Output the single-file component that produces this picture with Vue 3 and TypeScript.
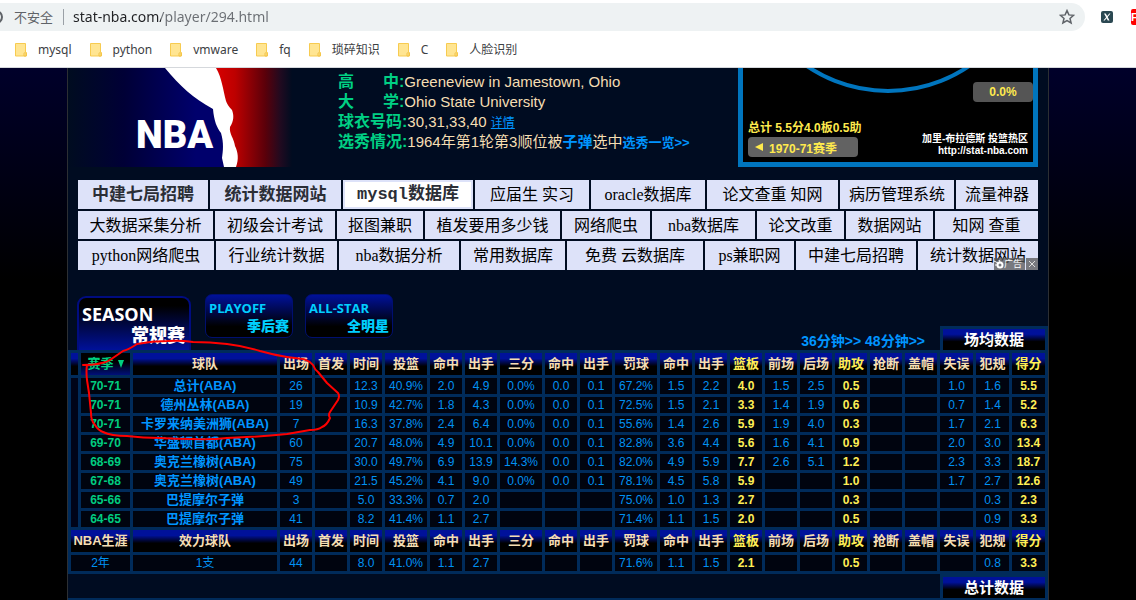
<script setup lang="ts">
import { ref } from 'vue'

interface Ad { label: string; size: number; kind?: 'strong' | 'active' }
interface Season { season: string; team: string; values: string[] }

const address = ref('stat-nba.com/player/294.html')
const bookmarks: string[] = ['mysql', 'python', 'vmware', 'fq', '琐碎知识', 'C', '人脸识别']

const adRows: Ad[][] = [
  [
    { label: '中建七局招聘', size: 130, kind: 'strong' },
    { label: '统计数据网站', size: 131, kind: 'strong' },
    { label: 'mysql数据库', size: 130, kind: 'active' },
    { label: '应届生 实习', size: 114 },
    { label: 'oracle数据库', size: 114 },
    { label: '论文查重 知网', size: 131 },
    { label: '病历管理系统', size: 114 },
    { label: '流量神器', size: 82 },
  ],
  [
    { label: '大数据采集分析', size: 135 },
    { label: '初级会计考试', size: 120 },
    { label: '抠图兼职', size: 86 },
    { label: '植发要用多少钱', size: 135 },
    { label: '网络爬虫', size: 88 },
    { label: 'nba数据库', size: 103 },
    { label: '论文改重', size: 87 },
    { label: '数据网站', size: 87 },
    { label: '知网 查重', size: 103 },
  ],
  [
    { label: 'python网络爬虫', size: 136 },
    { label: '行业统计数据', size: 121 },
    { label: 'nba数据分析', size: 120 },
    { label: '常用数据库', size: 104 },
    { label: '免费 云数据库', size: 136 },
    { label: 'ps兼职网', size: 89 },
    { label: '中建七局招聘', size: 120 },
    { label: '统计数据网站', size: 120 },
  ],
]

const columns: string[] = ['出场', '首发', '时间', '投篮', '命中', '出手', '三分', '命中', '出手', '罚球', '命中', '出手', '篮板', '前场', '后场', '助攻', '抢断', '盖帽', '失误', '犯规', '得分']
const wide = ['投篮', '三分', '罚球']
const medium = ['失误', '犯规', '得分']
const highlighted = ['篮板', '助攻', '得分']
const isKey = (i: number): boolean => highlighted.includes(columns[i])
const colClass = (name: string): string => (wide.includes(name) ? 'c-wide' : medium.includes(name) ? 'c-mid' : 'c-num')

const parse = (line: string): string[] => line.split(' ').map((v) => (v === '_' ? '' : v))

const seasons: Season[] = [
  { season: '70-71', team: '总计(ABA)', values: parse('26 _ 12.3 40.9% 2.0 4.9 0.0% 0.0 0.1 67.2% 1.5 2.2 4.0 1.5 2.5 0.5 _ _ 1.0 1.6 5.5') },
  { season: '70-71', team: '德州丛林(ABA)', values: parse('19 _ 10.9 42.7% 1.8 4.3 0.0% 0.0 0.1 72.5% 1.5 2.1 3.3 1.4 1.9 0.6 _ _ 0.7 1.4 5.2') },
  { season: '70-71', team: '卡罗来纳美洲狮(ABA)', values: parse('7 _ 16.3 37.8% 2.4 6.4 0.0% 0.0 0.1 55.6% 1.4 2.6 5.9 1.9 4.0 0.3 _ _ 1.7 2.1 6.3') },
  { season: '69-70', team: '华盛顿首都(ABA)', values: parse('60 _ 20.7 48.0% 4.9 10.1 0.0% 0.0 0.1 82.8% 3.6 4.4 5.6 1.6 4.1 0.9 _ _ 2.0 3.0 13.4') },
  { season: '68-69', team: '奥克兰橡树(ABA)', values: parse('75 _ 30.0 49.7% 6.9 13.9 14.3% 0.0 0.1 82.0% 4.9 5.9 7.7 2.6 5.1 1.2 _ _ 2.3 3.3 18.7') },
  { season: '67-68', team: '奥克兰橡树(ABA)', values: parse('49 _ 21.5 45.2% 4.1 9.0 0.0% 0.0 0.1 78.1% 4.5 5.8 5.9 _ _ 1.0 _ _ 1.7 2.7 12.6') },
  { season: '65-66', team: '巴提摩尔子弹', values: parse('3 _ 5.0 33.3% 0.7 2.0 _ _ _ 75.0% 1.0 1.3 2.7 _ _ 0.3 _ _ _ 0.3 2.3') },
  { season: '64-65', team: '巴提摩尔子弹', values: parse('41 _ 8.2 41.4% 1.1 2.7 _ _ _ 71.4% 1.1 1.5 2.0 _ _ 0.5 _ _ _ 0.9 3.3') },
]
const career: string[] = parse('44 _ 8.0 41.0% 1.1 2.7 _ _ _ 71.6% 1.1 1.5 2.1 _ _ 0.5 _ _ _ 0.8 3.3')
</script>

<template>
  <div class="screen">
    <header class="browser">
      <div class="toolbar">
        <div class="omnibox">
          <svg class="info" viewBox="0 0 16 16" aria-hidden="true"><circle cx="8" cy="8" r="6" fill="none" stroke="#5f6368" stroke-width="2" /></svg>
          <label class="security" for="address">不安全</label>
          <input id="address" v-model="address" class="address" type="text" spellcheck="false" />
          <button class="icon-button" type="button" aria-label="star">
            <svg viewBox="0 0 16 16" width="16" height="16"><path d="M8 1.6l1.9 4.3 4.7.4-3.600 3.100 1.100 4.600L8 11.600 3.900 14l1.100-4.600L1.400 6.300l4.700-.4z" fill="none" stroke="#5f6368" stroke-width="1.500" stroke-linejoin="miter" /></svg>
          </button>
        </div>
        <button class="extension" type="button" aria-label="extension x">
          <svg viewBox="0 0 12 12" width="12" height="12"><rect width="12" height="12" rx="2" fill="#2b4852" /><path d="M3 2.500h1.700L6.200 5l2.100-2.500h1.200L6.700 6l1.800 3.500H6.800L5.600 7.200 3.700 9.500H2.400l2.700-3.300z" fill="#fff" /></svg>
        </button>
        <button class="extension red" type="button">F</button>
      </div>
      <nav class="bookmarks">
        <a v-for="mark in bookmarks" :key="mark" href="#">
          <svg viewBox="0 0 12 14" width="12" height="14" aria-hidden="true">
            <path d="M.5.5h10v9h1v3.500H.5z" fill="#ffe592" stroke="#f7cb50" />
            <path d="M9 13V10.500c0-1 1.500-1 2 0V13z" fill="#ffe592" stroke="#f3c244" />
          </svg>
          <span>{{ mark }}</span>
        </a>
      </nav>
    </header>

    <main class="page">
      <section class="profile">
        <div class="logo">
          <svg viewBox="0 0 224 99" width="224" height="99" aria-hidden="true">
            <defs>
              <linearGradient id="blue" x1="0" x2="1"><stop offset="0" stop-color="#000c20" /><stop offset=".35" stop-color="#000036" /><stop offset=".8" stop-color="#00006c" /><stop offset="1" stop-color="#00006c" /></linearGradient>
              <linearGradient id="red" x1="0" x2="1"><stop offset="0" stop-color="#d80000" /><stop offset=".25" stop-color="#bd0000" /><stop offset=".65" stop-color="#5a000a" /><stop offset=".85" stop-color="#200a20" /><stop offset="1" stop-color="#000c20" /></linearGradient>
            </defs>
            <rect width="160" height="99" fill="url(#blue)" />
            <path d="M148 0H224V99H167Z" fill="url(#red)" />
            <path d="M97 0C112 18 125 30 145 41C146 53 149 60 153 65C156 75 155 83 154 90L156 99H168C171 91 170 84 167 78C166 70 161 66 162 59C166 53 166 47 164 42C161 39 159 36 158 33C155 22 154 10 148 0Z" fill="#fff" />
          </svg>
          <span class="logo-text">NBA</span>
        </div>

        <dl class="facts">
          <div><dt class="pair"><span>高</span><span>中</span>:</dt><dd>Greeneview in Jamestown, Ohio</dd></div>
          <div><dt class="pair"><span>大</span><span>学</span>:</dt><dd>Ohio State University</dd></div>
          <div><dt>球衣号码:</dt><dd>30,31,33,40 <a class="detail" href="#">详情</a></dd></div>
          <div><dt>选秀情况:</dt><dd>1964年第1轮第3顺位被<a class="club" href="#">子弹</a>选中<a class="draft" href="#">选秀一览&gt;&gt;</a></dd></div>
        </dl>

        <aside class="shots">
          <svg class="arc" viewBox="0 0 290 30" width="290" height="30" aria-hidden="true"><circle cx="145" cy="-121" r="144" fill="none" stroke="#0075be" stroke-width="4" /></svg>
          <span class="rate">0.0%</span>
          <div class="shots-foot">
            <div>
              <p class="summary">总计 5.5分4.0板0.5助</p>
              <button class="season-pick" type="button">
                <svg viewBox="0 0 8 8" width="8" height="8" aria-hidden="true"><path d="M8 0V8L0 4Z" fill="#ffea4d" /></svg>
                1970-71赛季
              </button>
            </div>
            <p class="credit">加里-布拉德斯 投篮热区<br />http://stat-nba.com</p>
          </div>
        </aside>
      </section>

      <section class="ads">
        <div v-for="(row, r) in adRows" :key="r" class="ad-row">
          <a v-for="(ad, i) in row" :key="i" href="#" :class="ad.kind" :style="{ flexGrow: ad.size }">{{ ad.label }}</a>
        </div>
        <div class="ad-mark">
          <span>
            <svg viewBox="0 0 10 10" width="10" height="10" aria-hidden="true"><circle cx="6" cy="6" r="2.500" fill="none" stroke="#fff" stroke-width="2" /><path d="M0 2l4 2M1 6h2M5 1l1 2" stroke="#fff" /></svg>广告</span>
          <button type="button" aria-label="close"><svg viewBox="0 0 8 8" width="8" height="8"><path d="M1 1l6 6M7 1L1 7" stroke="#ddd" /></svg></button>
        </div>
      </section>

      <nav class="stats-bar">
        <button class="tab current" type="button"><span>SEASON</span><b>常规赛</b></button>
        <button class="tab" type="button"><span>PLAYOFF</span><b>季后赛</b></button>
        <button class="tab" type="button"><span>ALL-STAR</span><b>全明星</b></button>
        <p class="per-time"><a href="#">36分钟&gt;&gt;</a> <a href="#">48分钟&gt;&gt;</a></p>
        <h2 class="heading">场均数据</h2>
      </nav>

      <table class="stats">
        <colgroup>
          <col class="c-edge" /><col class="c-season" /><col />
          <col v-for="(name, i) in columns" :key="i" :class="colClass(name)" />
        </colgroup>
        <thead>
          <tr>
            <th></th>
            <th class="sorted">赛季<svg viewBox="0 0 6 8" width="6" height="8" aria-hidden="true"><path d="M0 0H6L3 8Z" fill="#00d080" /></svg></th>
            <th>球队</th>
            <th v-for="(name, i) in columns" :key="i" :class="{ key: isKey(i) }">{{ name }}</th>
          </tr>
        </thead>
        <tbody>
          <tr v-for="(row, r) in seasons" :key="r">
            <td v-if="r === 0" class="edge" :rowspan="seasons.length"></td>
            <td class="season">{{ row.season }}</td>
            <td class="team"><a href="#">{{ row.team }}</a></td>
            <td v-for="(value, i) in row.values" :key="i" :class="{ key: isKey(i) }">{{ value }}</td>
          </tr>
        </tbody>
        <tbody>
          <tr>
            <th colspan="2">NBA生涯</th>
            <th>效力球队</th>
            <th v-for="(name, i) in columns" :key="i" :class="{ key: isKey(i) }">{{ name }}</th>
          </tr>
          <tr>
            <td colspan="2">2年</td>
            <td>1支</td>
            <td v-for="(value, i) in career" :key="i" :class="{ key: isKey(i) }">{{ value }}</td>
          </tr>
        </tbody>
      </table>

      <div class="totals"><h2 class="heading">总计数据</h2></div>
      <div class="next"></div>

      <svg class="pen" viewBox="0 0 270 110" width="270" height="110" aria-hidden="true">
        <path d="M5 26C12 26 17 26 24 24Q29 23 32 21L45 12Q50 11 59 5Q74 2 89 2Q102 1 115 3Q132 3 149 5Q166 7 182 12Q196 16 209 18C221 20 230 19 235 26Q237 31 240 33L249 44L260 54Q262 57 260 61L252 73Q250 76 252 79Q249 86 244 88Q240 91 232 91L209 95Q180 98 149 99Q132 101 115 100Q98 100 82 99Q65 99 49 97Q33 97 25 93Q20 91 17 86Q13 82 13 74L11 54L9 41Q8 32 9 26" fill="none" stroke="#f00" stroke-width="2" stroke-linecap="round" stroke-linejoin="round" />
      </svg>
    </main>
  </div>
</template>

<style>
html { background: #000; }
body { margin: 0; }
</style>

<style scoped>
.screen {
  --line: #002b5a;
  --sheet: #000c21;
  --cjk: "Noto Sans CJK SC", sans-serif;
  display: flex;
  flex-direction: column;
  min-height: 100vh;
  overflow: hidden;
  background: linear-gradient(#00002a 68px, #000 280px);
  font-family: "Liberation Sans", var(--cjk);
}
a { color: inherit; text-decoration: none; }
button { border: 0; padding: 0; background: none; color: inherit; font: inherit; cursor: pointer; }
p, h2, dl, dd { margin: 0; }

.browser { box-sizing: border-box; height: 68px; background: #fff; border-bottom: 1px solid #d5d8dc; }
.toolbar { display: flex; align-items: center; height: 28px; padding-top: 3px; }
.omnibox {
  display: flex;
  flex: 1;
  align-items: center;
  height: 28px;
  margin-left: -12px;
  padding-right: 10px;
  background: #eef2f3;
  border-radius: 0 14px 14px 0;
}
.info { width: 16px; height: 16px; flex: none; }
.security {
  margin-left: 10px;
  padding-right: 10px;
  border-right: 1px solid #9aa0a6;
  color: #5f6368;
  font: 13px/16px "Noto Sans", var(--cjk);
}
.address {
  flex: 1;
  min-width: 0;
  margin: 0;
  padding: 0 0 0 9px;
  border: 0;
  outline: 0;
  font: 14px/20px "Noto Sans", var(--cjk);
  color: transparent;
  background: linear-gradient(90deg, #202124 97px, #6b6f74 97px);
  background-clip: text;
  -webkit-background-clip: text;
}
.icon-button { display: flex; }
.extension { display: flex; flex: none; margin-left: 16px; }
.extension.red {
  width: 5px;
  height: 16px;
  margin-left: 18px;
  overflow: hidden;
  background: #f00;
  border-radius: 2px 0 0 2px;
  color: #fff;
  font: bold 11px/16px "Liberation Sans", sans-serif;
}
.bookmarks { display: flex; align-items: center; gap: 18px; height: 37px; padding-left: 15px; }
.bookmarks a { display: flex; align-items: center; gap: 11px; color: #3c4043; font: 12px/18px "Noto Sans", var(--cjk); }

.page {
  position: relative;
  display: flex;
  flex: 1;
  flex-direction: column;
  margin: 0 87px 0 67px;
  background: var(--sheet);
  border: solid #2c2f33;
  border-width: 0 1px;
}
.profile { display: flex; height: 99px; padding-right: 10px; }
.logo { position: relative; flex: none; width: 224px; }
.logo svg { display: block; }
.logo-text {
  position: absolute;
  left: 68px;
  top: 42px;
  color: #fff;
  font: 900 38px/50px Roboto, "Liberation Sans", sans-serif;
}
.facts { flex: 1; margin-left: 46px; padding-top: 4px; color: #f5deb3; font-size: 15px; line-height: 20px; white-space: nowrap; }
.facts > div { display: flex; height: 20px; }
.facts dt { color: #00d084; font-size: 16px; font-weight: bold; }
.pair { display: flex; }
.pair span + span { margin-left: 29px; }
.facts a { color: #0095ff; }
.facts .detail { font-size: 12px; text-decoration: underline; }
.facts .club { font-weight: bold; font-size: 15px; }
.facts .draft { font-weight: bold; font-size: 13px; }

.shots {
  box-sizing: border-box;
  position: relative;
  display: flex;
  flex: none;
  flex-direction: column;
  align-items: flex-end;
  justify-content: space-between;
  width: 300px;
  padding-top: 14px;
  background: #000;
  border: solid #0075be;
  border-width: 0 5px 5px;
  color: #ffea4d;
  font-size: 12px;
  font-weight: bold;
}
.arc { position: absolute; left: 0; top: 0; }
.rate { width: 60px; background: #555; border-radius: 4px; line-height: 20px; text-align: center; }
.shots-foot { display: flex; align-self: stretch; align-items: flex-end; justify-content: space-between; padding: 0 5px 5px; }
.summary { line-height: 18px; }
.season-pick { display: flex; align-items: center; gap: 6px; width: 110px; height: 20px; padding-left: 7px; background: #626262; border-radius: 4px; }
.credit { color: #fff; font-size: 10px; line-height: 12px; text-align: right; }

.ads { position: relative; display: flex; flex-direction: column; gap: 2px; margin: 13px 10px 0; }
.ad-row { display: flex; gap: 2px; height: 28px; }
.ad-row:first-child { height: 29px; }
.ad-row:nth-child(3) { height: 29px; }
.ad-row a {
  flex: 1 1 0;
  background: #dde2f9;
  color: #000;
  font: 16px/30px "Liberation Serif", var(--cjk);
  text-align: center;
  white-space: nowrap;
}
.ad-row .strong { color: #2b2e36; font-size: 17px; font-weight: bold; }
.ad-row .active { background: #fff; box-shadow: inset 0 0 0 2px #dde2f9; color: #2b2e36; font: bold 17px/30px "Liberation Mono", var(--cjk); }
.ad-mark { position: absolute; right: 0; bottom: 0; display: flex; gap: 1px; height: 12px; color: #fff; font-size: 9px; line-height: 12px; }
.ad-mark span { display: flex; align-items: center; width: 31px; background: rgba(85, 85, 85, 0.75); }
.ad-mark button { display: flex; align-items: center; justify-content: center; width: 12px; background: rgba(85, 85, 85, 0.75); }

.stats-bar { display: flex; align-items: flex-end; height: 80px; padding-left: 9px; }
.tab {
  box-sizing: border-box;
  display: flex;
  flex-direction: column;
  align-items: flex-start;
  width: 88px;
  height: 44px;
  margin: 0 12px 12px 0;
  padding: 3px 3px;
  background: linear-gradient(#00119a, #000 75%);
  border: 1px solid #000f70;
  border-radius: 7px;
  color: #00cfff;
  font: bold 13px/20px "Open Sans", var(--cjk);
}
.tab span { line-height: 20px; }
.tab b { align-self: flex-end; font-size: 14px; line-height: 15px; }
.tab.current {
  width: 114px;
  height: 54px;
  margin: 0 14px 0 0;
  padding: 6px 4px 0 3px;
  background: linear-gradient(#000 15%, #00119a);
  border: 2px solid #000c80;
  border-bottom: 0;
  border-radius: 9px 9px 0 0;
  color: #fff;
  font-size: 18px;
}
.tab.current b { font-size: 18px; line-height: 22px; }
.per-time { margin: 0 15px 0 auto; color: #0095ff; font-size: 14px; font-weight: bold; line-height: 18px; }
.heading {
  box-sizing: border-box;
  width: 108px;
  height: 24px;
  border: solid var(--line);
  border-width: 3px 3px 0;
  background: linear-gradient(#00119a 25%, #000 60%);
  color: #fff;
  font-size: 15px;
  line-height: 22px;
  text-align: center;
}

.stats { width: 100%; table-layout: fixed; border-spacing: 3px; background: var(--line); color: #0091f2; font-size: 12px; text-align: center; }
.c-edge { width: 7px; }
.c-season { width: 49px; }
.c-num { width: 32px; }
.c-wide { width: 42px; }
.c-mid { width: 33px; }
.stats th { height: 22px; padding: 0; background: linear-gradient(#00119a 25%, #000 60%); color: #f5deb3; font-size: 13px; line-height: 22px; white-space: nowrap; }
.stats td { height: 16px; padding: 0; background: #00040f; line-height: 16px; white-space: nowrap; }
.stats .sorted { background: linear-gradient(#000 40%, #00107a); color: #00d080; }
.sorted svg { margin-left: 4px; }
.stats .season { color: #00cc80; font-weight: bold; }
.stats .team { color: #0095ff; font-size: 13px; font-weight: bold; }
.stats .edge { background: #000418; }
.stats td.key, .stats th.key { color: #ffee55; }
.stats td.key { font-weight: bold; }

.totals { display: flex; justify-content: flex-end; }
.next { flex: 1; min-height: 2px; background: var(--line); }
.pen { position: absolute; left: 10px; top: 271px; overflow: visible; pointer-events: none; }
</style>
